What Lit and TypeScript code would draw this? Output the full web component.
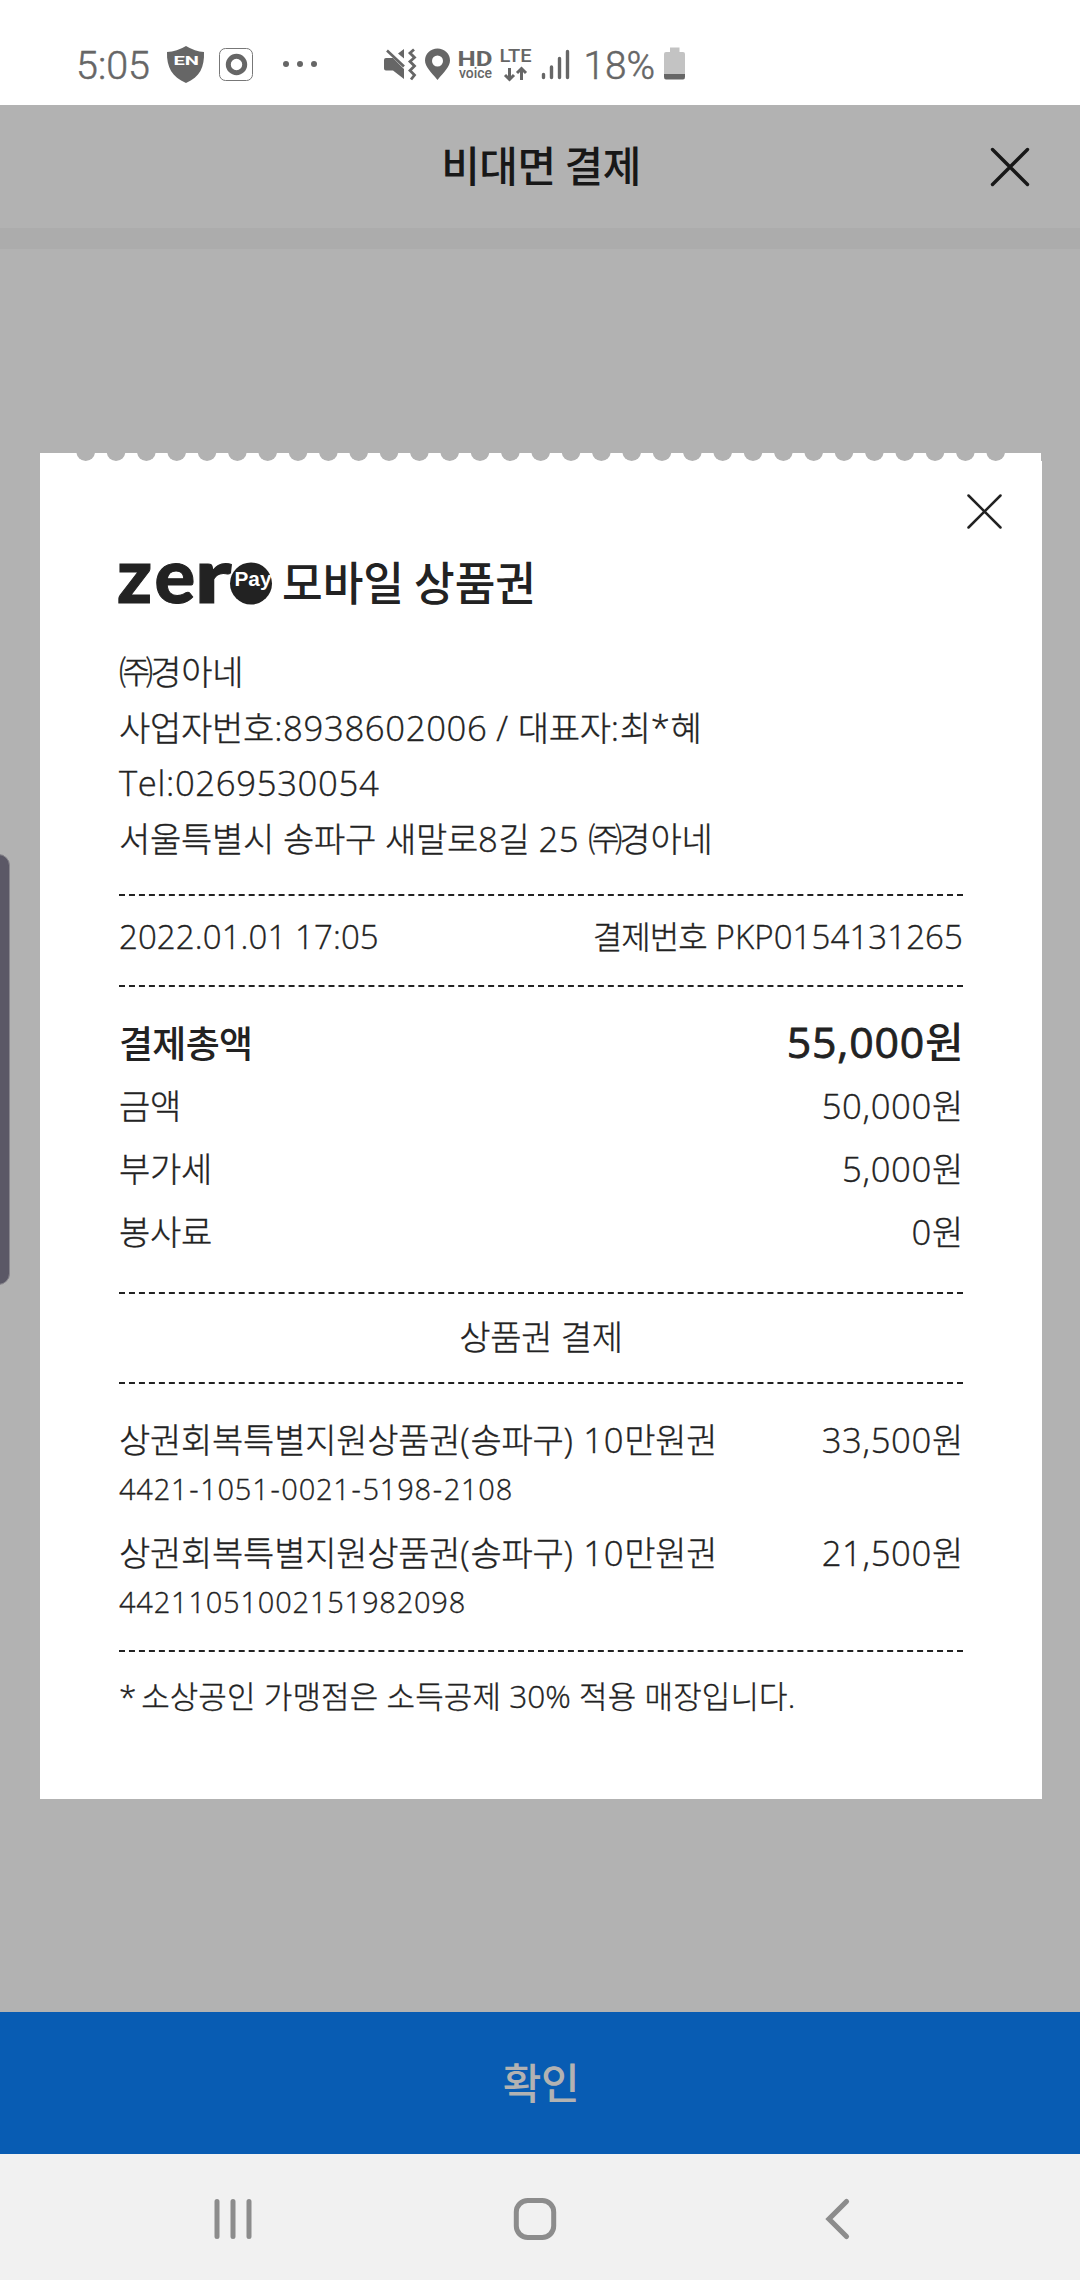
import { LitElement, html, svg, css } from "lit";
import { customElement, property } from "lit/decorators.js";

// Splits a string into Hangul, company-mark, hyphen and Latin/digit runs so each gets its own tracking.
const runs = (text: string) =>
  (text.match(/㈜|-|[\u3131-\uD7A3]+|[^\u3131-\uD7A3㈜-]+/g) ?? []).map((r) => {
    if (r === "㈜") return html`<span class="mark">${r}</span>`;
    if (r === "-") return html`<span class="en dash">${r}</span>`;
    return /[\u3131-\uD7A3]/.test(r) ? html`<span class="ko">${r}</span>` : html`<span class="en">${r}</span>`;
  });

const SCALLOPS = Array.from({ length: 31 }, (_, i) => 45.7 + i * 30.333);

@customElement("status-bar")
export class StatusBar extends LitElement {
  static styles = css`
    :host { display: block; height: 105px; background: #fff; }
    svg { display: block; }
    text { font-family: Roboto, sans-serif; fill: #666; }
    .clock { font-size: 39px; font-weight: 300; stroke: #666; stroke-width: 0.500px; }
    .bold { font-weight: 700; }
    .medium { font-weight: 500; }
    .badge { fill: #fff; font-weight: 700; }
  `;
  render() {
    return html`<svg width="1080" height="105" viewBox="0 0 1080 105">
      <text class="clock" x="76" y="79" textLength="74" lengthAdjust="spacingAndGlyphs">5:05</text>
      <path d="M186 46 Q195 51.500 204 52 C204.500 67 200 77 186 83 C172 77 166.500 67 167 52 Q177 51.500 186 46Z" fill="#666"/>
      <text x="173.500" y="65" font-size="13" class="badge" textLength="25.500" lengthAdjust="spacingAndGlyphs">EN</text>
      <rect x="219.500" y="48.500" width="33" height="32" rx="6" fill="#fff" stroke="#777" stroke-width="1"/>
      <circle cx="236.500" cy="64.500" r="8.200" fill="none" stroke="#666" stroke-width="5"/>
      <g fill="#666"><circle cx="286" cy="64" r="3"/><circle cx="300" cy="64" r="3"/><circle cx="314" cy="64" r="3"/></g>
      <path d="M386 58 H393 L404 69 V79 L393 70.500 H386 Q384 70.500 384 68.500 V60 Q384 58 386 58Z M404 49 V58.500 L398 53.500Z" fill="#666"/>
      <path d="M387 50.500 L404 66.500" stroke="#666" stroke-width="2.600"/>
      <path d="M414 49.500 L410 53 L414.500 57.500 L410 61.500 L414.500 66 L410 70.500 L414.500 75 L411 79.500" fill="none" stroke="#666" stroke-width="2.800"/>
      <path fill-rule="evenodd" d="M437.500 80 C431 72 425 66.500 425 60.500 A12.500 12 0 0 1 450 60.500 C450 66.500 444 72 437.500 80Z M437.500 55.500 A5.500 5.500 0 1 0 437.500 66.500 A5.500 5.500 0 1 0 437.500 55.500Z" fill="#666"/>
      <text class="bold" x="457.500" y="66" font-size="20.500" textLength="35" lengthAdjust="spacingAndGlyphs">HD</text>
      <text class="medium" x="459" y="78" font-size="14" textLength="33" lengthAdjust="spacingAndGlyphs">voice</text>
      <text class="medium" x="499.500" y="62" font-size="19" textLength="32" lengthAdjust="spacingAndGlyphs">LTE</text>
      <path d="M509.500 68 V79 M505 75 L509.500 79.500 L514 75 M521.500 80 V69 M517 73 L521.500 68.500 L526 73" fill="none" stroke="#666" stroke-width="3"/>
      <path d="M543.500 74.500 V77.500 M551.500 67 V77.500 M559.500 58.500 V77.500 M567.500 51.500 V77.500" stroke="#666" stroke-width="3.400" stroke-linecap="round"/>
      <text class="clock" x="583.500" y="79" textLength="71.500" lengthAdjust="spacingAndGlyphs">18%</text>
      <path d="M670 47.500 H679.500 V52 H683 Q685 52 685 54 V74.500 H664 V54 Q664 52 666 52 H670Z" fill="#c3c3c3"/>
      <path d="M664 74 H685 V77 Q685 79.500 683 79.500 H666 Q664 79.500 664 77Z" fill="#666"/>
    </svg>`;
  }
}

@customElement("receipt-line")
export class ReceiptLine extends LitElement {
  @property() label = "";
  @property() value = "";
  static styles = css`
    :host { display: flex; justify-content: space-between; align-items: baseline; white-space: pre; }
    .en { font-size: var(--en, 1.02em); letter-spacing: var(--ent, 0.65px); -webkit-text-stroke: var(--ens, 0.350px) currentColor; }
    .en:first-child { margin-right: var(--lead, 0px); }
    .ko { letter-spacing: var(--kot, -0.250px); }
    .mark { letter-spacing: -2.800px; }
    .dash { padding: 0 0.800px; }
    .value { font-size: var(--value, 1em); }
  `;
  render() {
    return html`<span>${runs(this.label)}</span>${this.value ? html`<span class="value">${runs(this.value)}</span>` : ""}`;
  }
}

@customElement("app-root")
export class AppRoot extends LitElement {
  static styles = css`
    :host {
      display: flex; flex-direction: column; position: relative; width: 1080px; height: 2280px; overflow: hidden;
      background: #b2b2b2; color: #222;
      font-family: "Open Sans", "Noto Sans CJK KR", sans-serif; font-weight: 300;
    }
    .header {
      height: 123px; flex: none; display: grid; grid-template-columns: 1fr auto 1fr; align-items: center;
      color: #181818; font: 500 42px/60px "Noto Sans CJK KR", sans-serif; letter-spacing: -0.500px;
    }
    .header svg { grid-column: 3; justify-self: end; margin-right: 47px; }
    .title { grid-column: 2; padding: 0 0 6px 2px; }
    .strip { height: 21px; flex: none; background: #acacac; }
    .stage { flex: 1; padding: 204px 38px 0 40px; }
    .card { height: 1346px; display: flex; flex-direction: column; }
    .edge { display: block; flex: none; }
    .paper { flex: 1; background: #fff; padding: 0 79px; display: flex; flex-direction: column; -webkit-text-stroke: 0.350px currentColor; }
    .close { align-self: flex-end; margin: 31px -41px 0 0; flex: none; }
    .brand { display: flex; height: 60px; margin-top: 24px; flex: none; overflow: visible; -webkit-text-stroke: 0; }
    .zer { font: 900 76px Lato, sans-serif; fill: #222; stroke: #222; stroke-width: 1px; }
    .pay { font: 700 19.500px "Liberation Sans", sans-serif; fill: #fff; }
    .voucher { font: 500 46px "Noto Sans CJK KR", sans-serif; fill: #222; }
    receipt-line { font-size: 34px; line-height: 56px; height: 56px; flex: none; }
    hr { width: 844px; margin: 0; border: 0; border-top: 2px dashed #222; flex: none; }
    .shop { margin: 28px 0; height: 222px; flex: none; word-spacing: -0.800px; }
    .shop receipt-line { height: 55.500px; }
    receipt-line.meta { --en: 33px; --ent: 0.100px; --kot: -0.900px; font-size: 32px; margin: 13px 0 20px; }
    receipt-line.total {
      --kot: -0.700px; --value: 42px; --ens: 0.800px; --ent: 0.800px; font-weight: 500; font-size: 37px;
      margin: -1px 0 1px; -webkit-text-stroke: 0;
    }
    .rows { padding: 24px 0 29px; flex: none; }
    .rows receipt-line { height: 63px; line-height: 63px; }
    .center { font-size: 34px; line-height: 56px; text-align: center; padding: 15px 0 17px; flex: none; letter-spacing: -0.300px; }
    .items { padding: 28px 0 13px; flex: none; }
    receipt-line.code { --en: 29px; --ent: 0.800px; line-height: 39px; height: 40px; margin-bottom: 17px; }
    .items receipt-line.code:last-child { margin-bottom: 16px; }
    receipt-line.note { font-size: 31px; --kot: 0.100px; --ent: 0px; --lead: -3.500px; margin-top: 16px; }
    .confirm {
      flex: none; height: 142px; box-sizing: border-box; padding: 0 0 5px 2px; background: #085cb3; color: #b2b2b2;
      display: flex; align-items: center; justify-content: center;
      font: 500 42px "Noto Sans CJK KR", sans-serif; letter-spacing: -0.500px;
    }
    .nav { flex: none; height: 126px; background: #f1f1f1; }
    .nav svg { display: block; }
    .handle {
      position: absolute; left: -13px; top: 854px; width: 21px; height: 429px; border-radius: 12px;
      background: #5b5866; border: 1px solid #88868d; box-sizing: content-box;
    }
  `;
  render() {
    return html`
      <status-bar></status-bar>
      <div class="header">
        <div class="title">비대면 결제</div>
        <svg width="46" height="46" viewBox="0 0 46 46"><path d="M5.500 5.500 L40.500 40.500 M40.500 5.500 L5.500 40.500" stroke="#181818" stroke-width="3.400" stroke-linecap="round"/></svg>
      </div>
      <div class="strip"></div>
      <div class="stage">
        <div class="card">
          <svg class="edge" width="1002" height="8" viewBox="0 0 1002 8">
            <rect width="1001" height="8" fill="#fff"/>
            ${SCALLOPS.map((x) => svg`<circle cx=${x} cy="-1.300" r="9.300" fill="#b2b2b2"/>`)}
          </svg>
          <div class="paper">
            <svg class="close" width="40" height="40" viewBox="0 0 40 40"><path d="M4.500 3.500 L36.500 35.500 M36.500 3.500 L4.500 35.500" stroke="#222" stroke-width="2.500" stroke-linecap="round"/></svg>
            <svg class="brand" width="844" height="60" viewBox="0 0 844 60">
              <text class="zer" x="-2 35.500" y="47">ze<tspan x="75.500" textLength="37" lengthAdjust="spacingAndGlyphs">r</tspan></text>
              <circle cx="132" cy="27.500" r="21" fill="#222"/>
              <text class="pay" x="115.500" y="30" textLength="37" lengthAdjust="spacingAndGlyphs">Pay</text>
              <text class="voucher" x="163" y="44" textLength="254" lengthAdjust="spacingAndGlyphs">모바일 상품권</text>
            </svg>
            <div class="shop">
              <receipt-line label="㈜경아네"></receipt-line>
              <receipt-line label="사업자번호:8938602006 / 대표자:최*혜"></receipt-line>
              <receipt-line label="Tel:0269530054"></receipt-line>
              <receipt-line label="서울특별시 송파구 새말로8길 25 ㈜경아네"></receipt-line>
            </div>
            <hr />
            <receipt-line class="meta" label="2022.01.01 17:05" value="결제번호 PKP0154131265"></receipt-line>
            <hr />
            <div class="rows">
              <receipt-line class="total" label="결제총액" value="55,000원"></receipt-line>
              <receipt-line label="금액" value="50,000원"></receipt-line>
              <receipt-line label="부가세" value="5,000원"></receipt-line>
              <receipt-line label="봉사료" value="0원"></receipt-line>
            </div>
            <hr />
            <div class="center">상품권 결제</div>
            <hr />
            <div class="items">
              <receipt-line label="상권회복특별지원상품권(송파구) 10만원권" value="33,500원"></receipt-line>
              <receipt-line class="code" label="4421-1051-0021-5198-2108"></receipt-line>
              <receipt-line label="상권회복특별지원상품권(송파구) 10만원권" value="21,500원"></receipt-line>
              <receipt-line class="code" label="44211051002151982098"></receipt-line>
            </div>
            <hr />
            <receipt-line class="note" label="* 소상공인 가맹점은 소득공제 30% 적용 매장입니다."></receipt-line>
          </div>
        </div>
      </div>
      <div class="confirm">확인</div>
      <div class="nav">
        <svg width="1080" height="126" viewBox="0 0 1080 126" fill="none" stroke="#8c8c8c" stroke-width="5" stroke-linecap="round">
          <path d="M217 47.500 V82.500 M233 47.500 V82.500 M249 47.500 V82.500"/>
          <rect x="516.300" y="46.500" width="37.400" height="37" rx="11.500"/>
          <path d="M846.500 47.500 L829 65 L846.500 82.500" stroke-width="5.200"/>
        </svg>
      </div>
      <div class="handle"></div>
    `;
  }
}
